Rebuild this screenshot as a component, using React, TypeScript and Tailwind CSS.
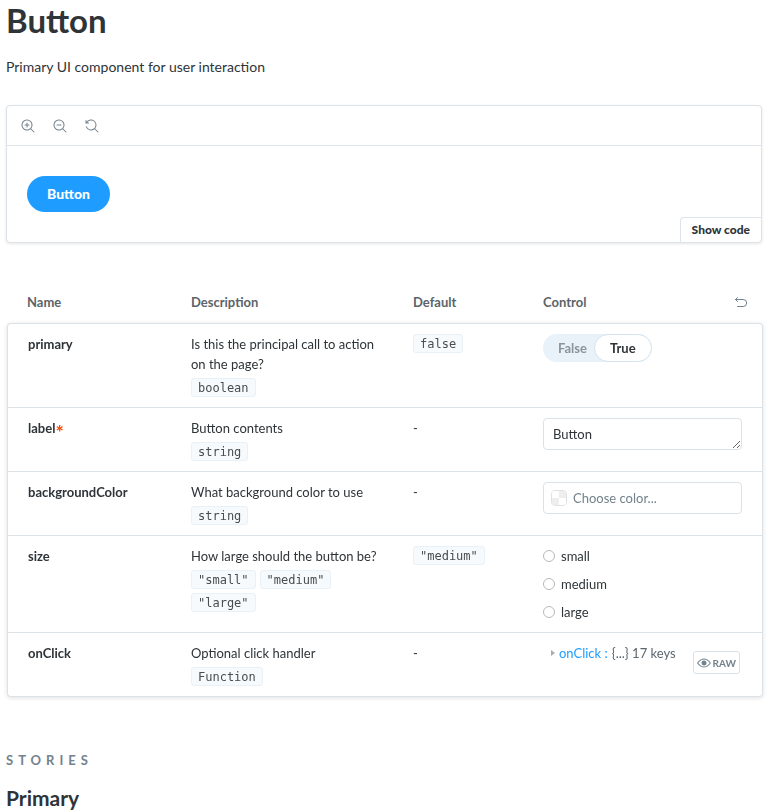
import { useState, type ReactNode } from "react";
import clsx from "clsx";

const SIZES = ["small", "medium", "large"];

function Chip({ children }: { children: ReactNode }) {
  return (
    <code className="inline-block h-[19px] rounded-[3px] border border-[#e8f1f7] bg-[#f7fafc] px-[6px] font-['DejaVu_Sans_Mono',monospace] text-[12px] leading-[19px] whitespace-nowrap text-[#474d51]">
      {children}
    </code>
  );
}

function ZoomIcon({ kind }: { kind: "in" | "out" | "reset" }) {
  return (
    <svg viewBox="0 0 14 14" className="size-[14px]" fill="currentColor" aria-hidden="true">
      {kind === "in" && (
        <path d="M6 3.5a.5.5 0 01.5.5v1.5H8a.5.5 0 010 1H6.5V8a.5.5 0 01-1 0V6.5H4a.5.5 0 010-1h1.5V4a.5.5 0 01.5-.5z" />
      )}
      {kind === "out" && <path d="M4 5.5a.5.5 0 000 1h4a.5.5 0 000-1H4z" />}
      {kind === "reset" ? (
        <path d="M1.5 2.837V1.5a.5.5 0 00-1 0V4a.5.5 0 00.5.5h2.5a.5.5 0 000-1H2.258a4.5 4.5 0 11-.496 4.016.5.5 0 10-.942.337 5.502 5.502 0 008.724 2.353.5.5 0 00.102.148l3 3a.5.5 0 00.708-.708l-3-3a.5.5 0 00-.148-.102A5.5 5.5 0 101.5 2.837z" />
      ) : (
        <path
          fillRule="evenodd"
          d="M9.544 10.206a5.5 5.5 0 11.662-.662.5.5 0 01.148.102l3 3a.5.5 0 01-.708.708l-3-3a.5.5 0 01-.102-.148zM10.5 6a4.5 4.5 0 11-9 0 4.5 4.5 0 019 0z"
        />
      )}
    </svg>
  );
}

function EyeIcon() {
  return (
    <svg viewBox="0 0 14 14" className="size-[14px]" fill="currentColor" aria-hidden="true">
      <path d="M7 9.5a2.5 2.5 0 100-5 2.5 2.5 0 000 5z" />
      <path
        fillRule="evenodd"
        d="M14 7l-.21.293C13.669 7.465 10.739 11.5 7 11.5S.332 7.465.21 7.293L0 7l.21-.293C.331 6.536 3.261 2.5 7 2.5s6.668 4.036 6.79 4.207L14 7zM2.896 5.302A12.725 12.725 0 001.245 7c.296.37.874 1.04 1.65 1.698C4.043 9.67 5.482 10.5 7 10.5c1.518 0 2.958-.83 4.104-1.802A12.72 12.72 0 0012.755 7c-.297-.37-.875-1.04-1.65-1.698C9.957 4.33 8.517 3.5 7 3.5c-1.519 0-2.958.83-4.104 1.802z"
      />
    </svg>
  );
}

function UndoIcon() {
  return (
    <svg
      viewBox="0 0 14 14"
      className="size-[14px]"
      fill="none"
      stroke="currentColor"
      strokeLinecap="round"
      strokeLinejoin="round"
      aria-hidden="true"
    >
      <path d="M3.5 2.5l-2 2 2 2M1.5 4.5H9.2a3.5 3.5 0 010 7H3.5" />
    </svg>
  );
}

function Preview() {
  return (
    <section className="mt-[26px] overflow-hidden rounded-[4px] border border-[#dde3e8] bg-white shadow-[0_1px_3px_rgba(0,0,0,0.1)]">
      <div className="flex h-10 items-center gap-[18px] border-b border-[#dde3e8] pl-[14px] text-[#73828c]">
        <button type="button" aria-label="Zoom in">
          <ZoomIcon kind="in" />
        </button>
        <button type="button" aria-label="Zoom out">
          <ZoomIcon kind="out" />
        </button>
        <button type="button" aria-label="Reset zoom">
          <ZoomIcon kind="reset" />
        </button>
      </div>
      <div className="px-5 pt-[30px]">
        <button
          type="button"
          className="h-9 rounded-full bg-[#1e9cff] px-5 text-[14px] leading-4 font-black text-white"
        >
          Button
        </button>
      </div>
      <div className="mt-[5px] flex justify-end">
        <button
          type="button"
          className="h-[25px] rounded-tl-[4px] border-t border-l border-[#dde3e8] px-[11px] text-[12px] leading-4 font-black text-[#2e3438]"
        >
          Show code
        </button>
      </div>
    </section>
  );
}

function BooleanControl() {
  const [value, setValue] = useState(true);
  return (
    <button
      type="button"
      role="switch"
      aria-checked={value}
      aria-label="primary"
      onClick={() => setValue(!value)}
      className="flex h-7 items-center rounded-full bg-[#e9f1f9] text-[13px] font-bold"
    >
      {[false, true].map((option) => (
        <span
          key={String(option)}
          className={clsx(
            "flex h-7 items-center rounded-full px-[15px]",
            option === value
              ? "border border-[#d5e4ee] bg-white text-[#2e3438]"
              : "-mr-2 text-[#8b949b]",
          )}
        >
          {option ? "True" : "False"}
        </span>
      ))}
    </button>
  );
}

function ColorControl() {
  return (
    <label className="flex h-8 items-center gap-[6px] rounded-[4px] border border-[#d9e2e9] px-[7px]">
      <span className="grid size-4 shrink-0 grid-cols-2 overflow-hidden rounded-[4px] border border-[#dfe2e4]">
        <span className="bg-white" />
        <span className="bg-[#eeeeee]" />
        <span className="bg-[#eeeeee]" />
        <span className="bg-white" />
      </span>
      <input
        type="text"
        aria-label="backgroundColor"
        placeholder="Choose color..."
        className="min-w-0 flex-1 text-[13px] leading-5 outline-none placeholder:text-[#73828c]"
      />
    </label>
  );
}

function SizeControl() {
  return (
    <div role="radiogroup" aria-label="size" className="flex flex-col items-start gap-2">
      {SIZES.map((size) => (
        <label key={size} className="flex items-center gap-[6px] leading-5">
          <input
            type="radio"
            name="size"
            value={size}
            className="size-3 appearance-none rounded-full border border-[#b5b9bc] checked:border-4 checked:border-[#1e9cff]"
          />
          {size}
        </label>
      ))}
    </div>
  );
}

function ObjectControl() {
  return (
    <div className="flex items-start justify-between">
      <button type="button" className="flex items-center pl-2 leading-5 whitespace-nowrap">
        <svg viewBox="0 0 4 6" className="mr-1 h-[6px] w-1 fill-[#a9aeb2]" aria-hidden="true">
          <path d="M0 0l4 3-4 3z" />
        </svg>
        <span className="text-[#1e9cff]">onClick :</span>
        <span className="ml-1 text-[#5c666e]">{"{...} 17 keys"}</span>
      </button>
      <button
        type="button"
        className="mt-2 mr-[2px] flex h-[23px] items-center gap-[2px] rounded-[3px] border border-[#d9e2e9] px-[3px] text-[10px] font-bold text-[#73828c]"
      >
        <EyeIcon />
        RAW
      </button>
    </div>
  );
}

type Arg = {
  name: string;
  required?: boolean;
  description: string;
  types: string[];
  defaultValue?: string;
  control: ReactNode;
};

const ARGS: Arg[] = [
  {
    name: "primary",
    description: "Is this the principal call to action on the page?",
    types: ["boolean"],
    defaultValue: "false",
    control: <BooleanControl />,
  },
  {
    name: "label",
    required: true,
    description: "Button contents",
    types: ["string"],
    control: (
      <textarea
        aria-label="label"
        defaultValue="Button"
        rows={1}
        className="block h-8 w-full overflow-hidden rounded-[4px] border border-[#d9e2e9] px-[9px] py-[5px] text-[13px] leading-5 outline-none"
      />
    ),
  },
  {
    name: "backgroundColor",
    description: "What background color to use",
    types: ["string"],
    control: <ColorControl />,
  },
  {
    name: "size",
    description: "How large should the button be?",
    types: ['"small"', '"medium"', '"large"'],
    defaultValue: '"medium"',
    control: <SizeControl />,
  },
  {
    name: "onClick",
    description: "Optional click handler",
    types: ["Function"],
    control: <ObjectControl />,
  },
];

function ArgsTable() {
  return (
    <table className="mt-10 ml-px w-full table-fixed border-separate border-spacing-0 text-left text-[13px] leading-5">
      <thead className="text-[#5c6468]">
        <tr>
          <th className="w-[169px] pt-[9px] pb-[11px] pl-5 font-bold">Name</th>
          <th className="w-[222px] pt-[9px] pb-[11px] pl-[15px] font-bold">Description</th>
          <th className="w-[130px] pt-[9px] pb-[11px] pl-[15px] font-bold">Default</th>
          <th className="pt-[9px] pr-[15px] pb-[11px] pl-[15px] font-bold">
            <div className="flex items-center justify-between">
              Control
              <button type="button" aria-label="Reset controls" className="text-[#73828c]">
                <UndoIcon />
              </button>
            </div>
          </th>
        </tr>
      </thead>
      <tbody className="align-top drop-shadow-[0_1px_2px_rgba(0,0,0,0.12)] [&_td]:border-t [&_td]:border-[#dbe2e8] [&_td]:bg-white [&_td]:py-[10px] [&_td]:pl-[15px] [&_td:first-child]:border-l [&_td:first-child]:pl-5 [&_td:last-child]:border-r [&_td:last-child]:pr-5 [&_tr:first-child_td:first-child]:rounded-tl-[4px] [&_tr:first-child_td:last-child]:rounded-tr-[4px] [&_tr:last-child_td]:border-b [&_tr:last-child_td:first-child]:rounded-bl-[4px] [&_tr:last-child_td:last-child]:rounded-br-[4px]">
        {ARGS.map((arg) => (
          <tr key={arg.name}>
            <td className="font-bold">
              {arg.name}
              {arg.required && (
                <span className="align-sub font-[Inter,sans-serif] text-[16px] leading-none font-medium text-[#ff4400]">
                  *
                </span>
              )}
            </td>
            <td className="pr-[15px]">
              <p>{arg.description}</p>
              <div className="mt-1 flex flex-wrap gap-1">
                {arg.types.map((type) => (
                  <Chip key={type}>{type}</Chip>
                ))}
              </div>
            </td>
            <td>
              {arg.defaultValue ? (
                <div className="flex">
                  <Chip>{arg.defaultValue}</Chip>
                </div>
              ) : (
                "-"
              )}
            </td>
            <td>{arg.control}</td>
          </tr>
        ))}
      </tbody>
    </table>
  );
}

export default function App() {
  return (
    <main className="bg-white pr-2 pl-[6px] font-[Lato,sans-serif] text-[#2e3438]">
      <h1 className="text-[33px] leading-10 font-bold">Button</h1>
      <p className="mt-[15px] text-[14px] leading-6">Primary UI component for user interaction</p>
      <Preview />
      <ArgsTable />
      <h2 className="mt-[53px] text-[13px] leading-5 font-bold tracking-[5px] text-[#73828c] uppercase">
        Stories
      </h2>
      <h3 className="mt-4 text-[21px] leading-6 font-bold">Primary</h3>
    </main>
  );
}
